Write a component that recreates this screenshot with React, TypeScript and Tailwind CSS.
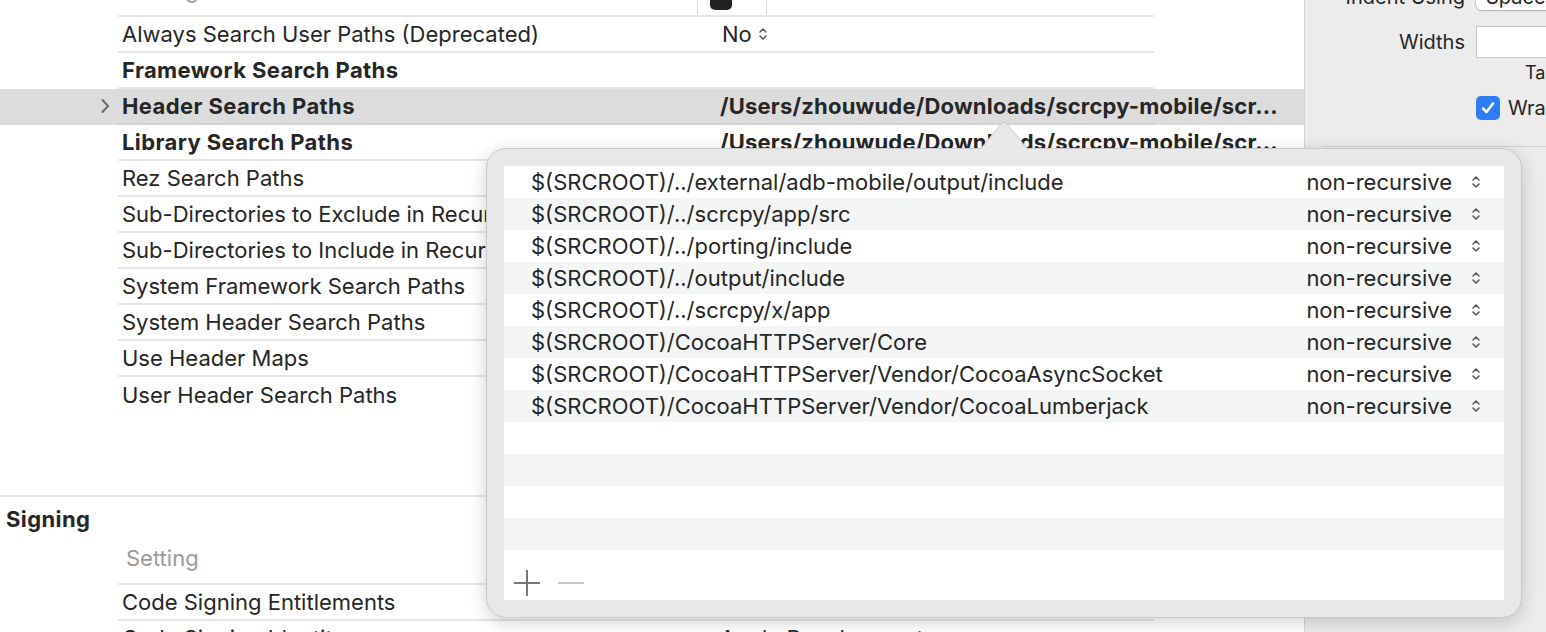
import React from "react";

const FONT = { fontFamily: "Inter, 'Liberation Sans', sans-serif" };

function Stepper({ className = "" }: { className?: string }) {
  return (
    <svg width="10" height="16" viewBox="0 0 10 16" className={className}>
      <path d="M2 6 L5 3 L8 6" fill="none" stroke="#555" strokeWidth="1.5" strokeLinecap="round" strokeLinejoin="round" />
      <path d="M2 10 L5 13 L8 10" fill="none" stroke="#555" strokeWidth="1.5" strokeLinecap="round" strokeLinejoin="round" />
    </svg>
  );
}

type RowProps = {
  label: string;
  value?: React.ReactNode;
  bold?: boolean;
  highlight?: boolean;
  chevron?: boolean;
  line?: boolean;
};

function Row({ label, value, bold, highlight, chevron, line = true }: RowProps) {
  return (
    <div className={`relative h-[36px] w-full flex ${highlight ? "bg-[#dcdcdc]" : ""}`}>
      {chevron && (
        <div className="absolute left-[100px] top-0 h-[34px] flex items-center">
          <svg width="10" height="16" viewBox="0 0 10 16">
            <path d="M2.5 2 L8 8 L2.5 14" fill="none" stroke="#6b6b6b" strokeWidth="2" strokeLinecap="round" strokeLinejoin="round" />
          </svg>
        </div>
      )}
      <div className={`ml-[118px] w-[1036px] shrink-0 h-full flex items-center ${line ? "border-b-2" : ""} ${highlight ? "border-[#d2d2d2]" : "border-[#e6e6e6]"}`}>
        <div className={`w-[602px] shrink-0 pl-[4px] whitespace-nowrap text-[22px] text-[#262626] ${bold ? "font-bold tracking-[0.4px]" : ""}`}>{label}</div>
        <div className={`shrink-0 whitespace-nowrap text-[22px] text-[#262626] ${bold ? "font-bold tracking-[0.2px]" : ""}`}>{value}</div>
      </div>
    </div>
  );
}

const PATH = "/Users/zhouwude/Downloads/scrcpy-mobile/scr...";

const entries = [
  "$(SRCROOT)/../external/adb-mobile/output/include",
  "$(SRCROOT)/../scrcpy/app/src",
  "$(SRCROOT)/../porting/include",
  "$(SRCROOT)/../output/include",
  "$(SRCROOT)/../scrcpy/x/app",
  "$(SRCROOT)/CocoaHTTPServer/Core",
  "$(SRCROOT)/CocoaHTTPServer/Vendor/CocoaAsyncSocket",
  "$(SRCROOT)/CocoaHTTPServer/Vendor/CocoaLumberjack",
];

export default function App() {
  return (
    <div className="relative w-[1546px] h-[632px] overflow-hidden bg-white flex items-start" style={FONT}>
      {/* Main settings list */}
      <div className="w-[1304px] shrink-0 block">
        <div className="mt-[-19px]">
          {/* header row (cut off) */}
          <div className="relative h-[36px] w-full flex">
            <div className="ml-[118px] w-[1036px] shrink-0 h-full flex items-center border-b-2 border-[#e6e6e6]">
              <div className="w-[579px] shrink-0 pl-[8px] pb-[16px] text-[22px] text-[#9a9a9a] whitespace-nowrap">Setting</div>
              <div className="w-[1px] h-full bg-[#d8d8d8]" />
              <div className="ml-[12px] w-[22px] h-[22px] mt-[2px] rounded-[5px] bg-[#222]" />
              <div className="ml-[34px] w-[1px] h-full bg-[#d8d8d8]" />
            </div>
          </div>
          <Row label="Always Search User Paths (Deprecated)" value={<span className="inline-flex items-center pl-[2px]">No<Stepper className="ml-[6px]" /></span>} />
          <Row label="Framework Search Paths" bold />
          <Row label="Header Search Paths" bold highlight chevron value={PATH} />
          <Row label="Library Search Paths" bold value={PATH} />
          <Row label="Rez Search Paths" />
          <Row label="Sub-Directories to Exclude in Recursive Searches" />
          <Row label="Sub-Directories to Include in Recursive Searches" />
          <Row label="System Framework Search Paths" />
          <Row label="System Header Search Paths" />
          <Row label="Use Header Maps" />
          <Row label="User Header Search Paths" line={false} />
        </div>
        <div className="h-[82px]" />
        <div className="h-[2px] w-full bg-[#e6e6e6]" />
        <div className="h-[44px] flex items-center pl-[6px] text-[22px] font-bold tracking-[0.4px] text-[#262626]">Signing</div>
        <div className="ml-[118px] w-[1036px] h-[44px] border-b-2 border-[#e6e6e6] flex items-center pb-[8px]">
          <div className="pl-[8px] text-[22px] text-[#9a9a9a]">Setting</div>
        </div>
        <Row label="Code Signing Entitlements" />
        <Row label="Code Signing Identity" value="Apple Development" />
      </div>

      {/* Inspector */}
      <div className="flex-1 self-stretch bg-[#ececec] border-l border-[#d4d4d4] block text-[20px] text-[#262626]">
        <div className="mt-[-16px] h-[26px] flex items-center">
          <div className="w-[160px] shrink-0 text-right whitespace-nowrap">Indent Using</div>
          <div className="ml-[11px] flex-1 h-[26px] bg-white rounded-[6px] shadow-[0_0_0_1px_rgba(0,0,0,0.12),0_1px_2px_rgba(0,0,0,0.15)] pl-[10px] flex items-center whitespace-nowrap overflow-hidden">Spaces</div>
        </div>
        <div className="mt-[16px] h-[32px] flex items-center">
          <div className="w-[160px] shrink-0 text-right">Widths</div>
          <div className="ml-[11px] flex-1 h-[32px] bg-white border border-[#c4c4c4] border-r-0" />
        </div>
        <div className="mt-[4px] h-[20px] flex items-center">
          <div className="ml-[220px] text-[18px] whitespace-nowrap">Tab</div>
        </div>
        <div className="mt-[14px] h-[24px] flex items-center">
          <div className="ml-[171px] w-[24px] h-[24px] rounded-[5px] bg-[#2f7df6] flex items-center justify-center shrink-0">
            <svg width="16" height="16" viewBox="0 0 16 16">
              <path d="M3 8.5 L6.5 12 L13 3.5" fill="none" stroke="white" strokeWidth="2.6" strokeLinecap="round" strokeLinejoin="round" />
            </svg>
          </div>
          <div className="ml-[8px] whitespace-nowrap">Wrap lines</div>
        </div>
        <div className="mt-[26px] ml-[17px] h-[1px] bg-[#d4d4d4]" />
      </div>

      {/* Popover */}
      <div className="absolute left-[486px] top-[148px] w-[1036px] h-[470px] rounded-[20px] bg-[#e8e8e8] border border-[#c9c9c9] shadow-[0_4px_18px_rgba(0,0,0,0.18)] p-[17px]">
        <div className="w-[1000px] h-[434px] bg-white flex flex-col">
          {entries.map((e, i) => (
            <div key={i} className={`h-[32px] shrink-0 flex items-center text-[22px] text-[#262626] ${i % 2 === 1 ? "bg-[#f4f5f5]" : "bg-white"}`}>
              <div className="flex-1 pl-[27px] whitespace-nowrap">{e}</div>
              <div className="whitespace-nowrap">non-recursive</div>
              <Stepper className="ml-[19px] mr-[23px]" />
            </div>
          ))}
          {[0, 1, 2, 3].map((i) => (
            <div key={`e${i}`} className={`h-[32px] shrink-0 ${i % 2 === 1 ? "bg-[#f4f5f5]" : "bg-white"}`} />
          ))}
          <div className="flex-1 flex items-end pb-[3px] pl-[9px] gap-[17px]">
            <svg width="28" height="28" viewBox="0 0 28 28">
              <path d="M14 1 V27 M1 14 H27" stroke="#777" strokeWidth="2" />
            </svg>
            <svg width="26" height="28" viewBox="0 0 26 28">
              <path d="M0 14 H26" stroke="#c6c6c6" strokeWidth="2" />
            </svg>
          </div>
        </div>
      </div>
      {/* Popover arrow */}
      <svg className="absolute left-[980px] top-[121px]" width="48" height="30" viewBox="0 0 48 30">
        <path d="M0 29 L21 3 Q24 -0.5 27 3 L48 29 Z" fill="#e8e8e8" />
        <path d="M0 28.5 L21 3 Q24 -0.5 27 3 L48 28.5" fill="none" stroke="#c9c9c9" strokeWidth="1" />
      </svg>
    </div>
  );
}
